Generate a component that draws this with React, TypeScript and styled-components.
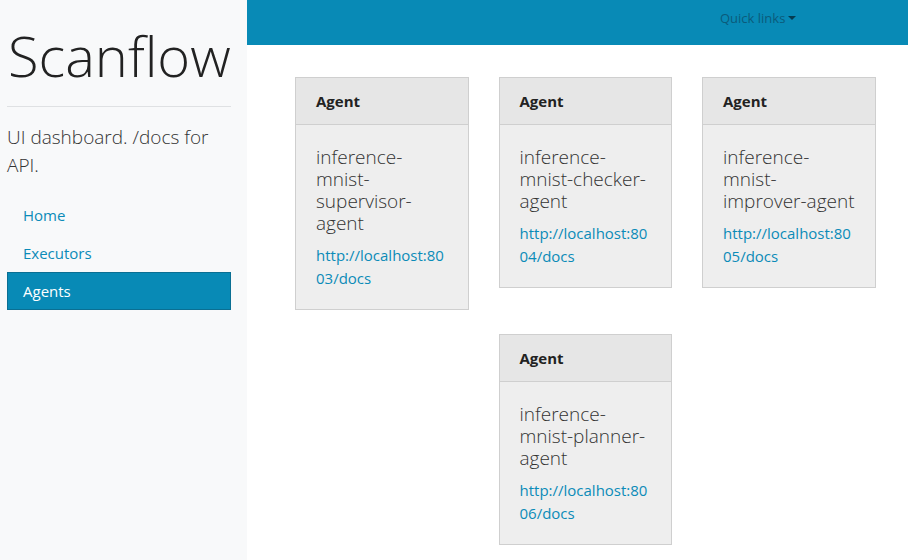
import styled, { createGlobalStyle } from "styled-components"

const Global = createGlobalStyle`
  html, body { margin: 0; padding: 0; background: #fff; }
  body { font-family: "Open Sans", "Liberation Sans", sans-serif; color: #222; }
  * { box-sizing: border-box; }
`

const Layout = styled.div`
  display: flex;
  min-height: 560px;
`

const Sidebar = styled.aside`
  width: 247px;
  flex-shrink: 0;
  background: #f8f9fa;
  padding: 22px 16px 0 7px;
`

const Brand = styled.h1`
  margin: 0;
  font-size: 56px;
  font-weight: 300;
  line-height: 67px;
  color: #222;
  padding-left: 1px;
  border-bottom: 1px solid #dfe1e3;
  padding-bottom: 17px;
`

const Lead = styled.p`
  margin: 16px 0 17px;
  font-size: 19px;
  font-weight: 300;
  line-height: 28px;
  color: #333;
`

const Nav = styled.nav`
  display: flex;
  flex-direction: column;
`

const NavLink = styled.a<{ $active?: boolean }>`
  display: block;
  padding: 8px 16px;
  font-size: 15px;
  line-height: 22px;
  text-decoration: none;
  color: ${(p) => (p.$active ? "#fff" : "#0b8bb8")};
  background: ${(p) => (p.$active ? "#088ab6" : "transparent")};
  box-shadow: ${(p) => (p.$active ? "inset 0 0 0 1px #0a6f93" : "none")};
`

const Main = styled.main`
  flex: 1;
  display: flex;
  flex-direction: column;
`

const Topbar = styled.header`
  height: 45px;
  background: #088ab6;
  display: flex;
  align-items: flex-start;
  padding: 9px 0 0 473px;
`

const Quick = styled.span`
  font-size: 13px;
  line-height: 18px;
  color: #0b5b7b;
  &::after {
    content: "";
    display: inline-block;
    margin-left: 3px;
    vertical-align: 3px;
    border-top: 4px solid #053b50;
    border-left: 4px solid transparent;
    border-right: 4px solid transparent;
  }
`

const Cards = styled.div`
  display: flex;
  flex-wrap: wrap;
  justify-content: center;
  align-items: flex-start;
  padding: 32px 17.5px 0 33px;
`

const Card = styled.div`
  width: 173.5px;
  margin: 0 15px 24px;
  border: 1px solid #cfcfcf;
  background: #eeeeee;
`

const CardHeader = styled.div`
  height: 47px;
  padding: 0 20px;
  display: flex;
  align-items: center;
  background: #e6e6e6;
  border-bottom: 1px solid #cfcfcf;
  font-size: 15px;
  font-weight: 700;
  color: #222;
`

const CardBody = styled.div`
  padding: 21px 16px 20px 20px;
`

const AgentName = styled.div`
  font-size: 19px;
  font-weight: 300;
  line-height: 22px;
  color: #333;
  margin-bottom: 10px;
`

const DocsLink = styled.a`
  display: block;
  font-size: 15px;
  line-height: 22.5px;
  color: #0b8bb8;
  text-decoration: none;
  word-break: break-all;
`

const agents = [
  { name: "inference-mnist-supervisor-agent", url: "http://localhost:8003/docs" },
  { name: "inference-mnist-checker-agent", url: "http://localhost:8004/docs" },
  { name: "inference-mnist-improver-agent", url: "http://localhost:8005/docs" },
  { name: "inference-mnist-planner-agent", url: "http://localhost:8006/docs" },
]

export default function App() {
  return (
    <>
      <Global />
      <Layout>
        <Sidebar>
          <Brand>Scanflow</Brand>
          <Lead>UI dashboard. /docs for API.</Lead>
          <Nav>
            <NavLink href="#">Home</NavLink>
            <NavLink href="#">Executors</NavLink>
            <NavLink href="#" $active>Agents</NavLink>
          </Nav>
        </Sidebar>
        <Main>
          <Topbar>
            <Quick>Quick links</Quick>
          </Topbar>
          <Cards>
            {agents.map((a) => (
              <Card key={a.url}>
                <CardHeader>Agent</CardHeader>
                <CardBody>
                  <AgentName>{a.name}</AgentName>
                  <DocsLink href={a.url}>{a.url}</DocsLink>
                </CardBody>
              </Card>
            ))}
          </Cards>
        </Main>
      </Layout>
    </>
  )
}
